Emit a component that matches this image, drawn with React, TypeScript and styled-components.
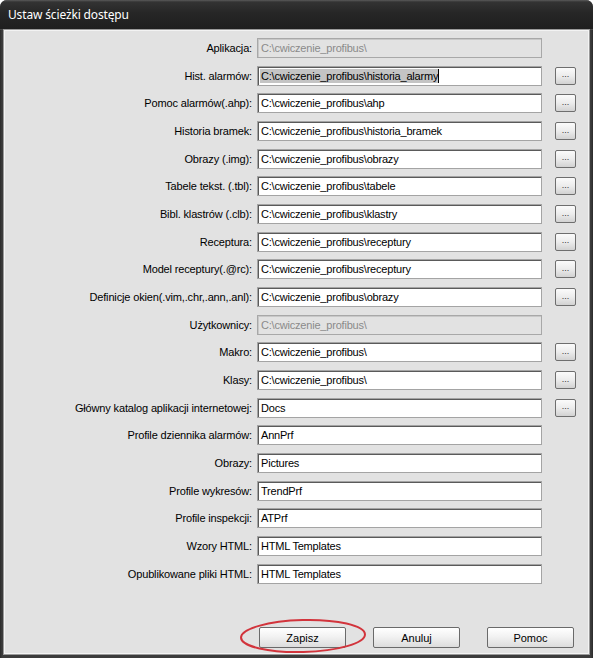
import React from 'react'
import styled, { createGlobalStyle } from 'styled-components'

const GlobalStyle = createGlobalStyle`
  html, body {
    margin: 0;
    padding: 0;
    background: #ffffff;
  }
`

const Window = styled.div`
  box-sizing: border-box;
  width: 593px;
  height: 658px;
  display: flex;
  flex-direction: column;
  padding: 0 4px 4px;
  background: linear-gradient(90deg, #2a2a2a, #3c3c3c 2px, #3c3c3c calc(100% - 2px), #2a2a2a);
  border-radius: 7px 7px 0 0;
  overflow: hidden;
`

const TitleBar = styled.div`
  height: 30px;
  margin: 0 -4px;
  display: flex;
  align-items: center;
  padding-left: 8px;
  background: linear-gradient(180deg, #5a5a5a 0, #333333 2px, #262626 45%, #1e1e1e 100%);
  border-bottom: 1px solid #4a4a4a;
  box-sizing: border-box;
`

const Title = styled.span`
  color: #ffffff;
  font-family: 'Noto Sans', 'Open Sans', sans-serif;
  font-size: 12px;
  letter-spacing: -0.15px;
`

const Panel = styled.div`
  flex: 1;
  display: flex;
  flex-direction: column;
  background: #e2e2e2;
  border: 1px solid #f3f3f3;
  box-shadow: 0 0 0 1px #9a9a9a;
  font-family: 'Liberation Sans', Arial, sans-serif;
  font-size: 11px;
  color: #000000;
`

const Form = styled.div`
  display: grid;
  grid-template-columns: 252px 285px 34px;
  grid-auto-rows: 20px;
  row-gap: 7.68px;
  padding-top: 7px;
  align-items: center;
`

const Label = styled.div`
  padding-right: 5px;
  text-align: right;
  white-space: nowrap;
  letter-spacing: -0.15px;
`

const Field = styled.div<{ $disabled?: boolean }>`
  box-sizing: border-box;
  height: 20px;
  display: flex;
  align-items: center;
  padding-left: 3px;
  border: 1px solid ${(p) => (p.$disabled ? '#a8a8a8' : '#a4a4a4')};
  box-shadow: inset 1px 1px 0 ${(p) => (p.$disabled ? '#c8c8c8' : '#5a5a5a')};
  background: ${(p) => (p.$disabled ? '#e2e2e2' : '#ffffff')};
  color: ${(p) => (p.$disabled ? '#8a8a8a' : '#000000')};
  letter-spacing: -0.2px;
  white-space: nowrap;
  overflow: hidden;
`

const Selection = styled.span`
  margin-left: -1px;
  padding: 1px 0 1px 1px;
  background: #c4c4c4;
  border-right: 1px solid #000000;
`

const BrowseButton = styled.div`
  justify-self: end;
  box-sizing: border-box;
  width: 21px;
  height: 18px;
  border: 1px solid #6e6e6e;
  border-radius: 2px;
  background: linear-gradient(180deg, #fbfbfb 0%, #ececec 50%, #d2d2d2 100%);
  display: flex;
  align-items: center;
  justify-content: center;
  font-size: 9px;
  color: #333333;
  line-height: 1;
  padding-bottom: 2px;
`

const Footer = styled.div`
  position: relative;
  margin-top: auto;
  padding: 0 14px 5px 0;
  display: flex;
  justify-content: flex-end;
  gap: 27px;
`

const DialogButton = styled.div`
  box-sizing: border-box;
  width: 87px;
  height: 21px;
  border: 1px solid #6a6a6a;
  border-radius: 2px;
  background: linear-gradient(180deg, #ffffff 0%, #f2f2f2 45%, #dcdcdc 100%);
  display: flex;
  align-items: center;
  justify-content: center;
`

const Annotation = styled.svg`
  position: absolute;
  left: 231px;
  top: -10px;
  width: 134px;
  height: 38px;
  pointer-events: none;
  overflow: visible;
`

type Row = {
  label: string
  value: string
  disabled?: boolean
  browse?: boolean
  selected?: boolean
}

const base = 'C:\\cwiczenie_profibus\\'

const rows: Row[] = [
  { label: 'Aplikacja:', value: base, disabled: true },
  { label: 'Hist. alarmów:', value: base + 'historia_alarmy', browse: true, selected: true },
  { label: 'Pomoc alarmów(.ahp):', value: base + 'ahp', browse: true },
  { label: 'Historia bramek:', value: base + 'historia_bramek', browse: true },
  { label: 'Obrazy (.img):', value: base + 'obrazy', browse: true },
  { label: 'Tabele tekst. (.tbl):', value: base + 'tabele', browse: true },
  { label: 'Bibl. klastrów (.clb):', value: base + 'klastry', browse: true },
  { label: 'Receptura:', value: base + 'receptury', browse: true },
  { label: 'Model receptury(.@rc):', value: base + 'receptury', browse: true },
  { label: 'Definicje okien(.vim,.chr,.ann,.anl):', value: base + 'obrazy', browse: true },
  { label: 'Użytkownicy:', value: base, disabled: true },
  { label: 'Makro:', value: base, browse: true },
  { label: 'Klasy:', value: base, browse: true },
  { label: 'Główny katalog aplikacji internetowej:', value: 'Docs', browse: true },
  { label: 'Profile dziennika alarmów:', value: 'AnnPrf' },
  { label: 'Obrazy:', value: 'Pictures' },
  { label: 'Profile wykresów:', value: 'TrendPrf' },
  { label: 'Profile inspekcji:', value: 'ATPrf' },
  { label: 'Wzory HTML:', value: 'HTML Templates' },
  { label: 'Opublikowane pliki HTML:', value: 'HTML Templates' },
]

export default function App() {
  return (
    <>
      <GlobalStyle />
      <Window>
        <TitleBar>
          <Title>Ustaw ścieżki dostępu</Title>
        </TitleBar>
        <Panel>
          <Form>
            {rows.map((row, i) => (
              <React.Fragment key={`${i}${row.label}`}>
                <Label>{row.label}</Label>
                <Field $disabled={row.disabled}>
                  {row.selected ? <Selection>{row.value}</Selection> : row.value}
                </Field>
                {row.browse ? <BrowseButton>...</BrowseButton> : <span />}
              </React.Fragment>
            ))}
          </Form>
          <Footer>
            <DialogButton>Zapisz</DialogButton>
            <DialogButton>Anuluj</DialogButton>
            <DialogButton>Pomoc</DialogButton>
            <Annotation viewBox="0 0 134 38">
              <ellipse
                cx="67"
                cy="19"
                rx="62"
                ry="16"
                fill="none"
                stroke="#d2343c"
                strokeWidth="2"
                transform="rotate(-1.5 67 19)"
              />
            </Annotation>
          </Footer>
        </Panel>
      </Window>
    </>
  )
}
